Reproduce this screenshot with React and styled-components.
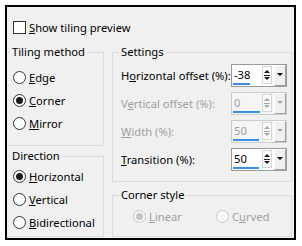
import React from "react";
import styled, { createGlobalStyle } from "styled-components";

const GlobalStyle = createGlobalStyle`
  body {
    margin: 0;
    background: #fff;
    font-family: "Noto Sans", "Liberation Sans", sans-serif;
    font-size: 11.2px;
    color: #000;
  }
`;

const Dialog = styled.div`
  margin: 5px 0 0 5px;
  width: 287px;
  height: 231px;
  border: 2px solid #000;
  background: #f0f0f0;
  display: flex;
  flex-direction: column;
`;

const CheckRow = styled.label`
  display: flex;
  align-items: center;
  gap: 3px;
  height: 13px;
  margin: 14px 0 0 6px;
  line-height: 13px;
`;

const CheckBox = styled.span`
  width: 13px;
  height: 13px;
  box-sizing: border-box;
  border: 1px solid #333;
  background: #fff;
`;

const Columns = styled.div`
  display: flex;
  gap: 8px;
  margin-top: 10px;
`;

const Column = styled.div`
  display: flex;
  flex-direction: column;
  width: ${(p) => p.$width}px;
`;

const Group = styled.fieldset`
  margin: ${(p) => p.$top || 0}px 0 0 0;
  padding: 0;
  min-width: 0;
  border: 1px solid #dcdcdc;
  border-left: ${(p) => (p.$noLeft ? "none" : "1px solid #dcdcdc")};
`;

const Title = styled.legend`
  margin-left: ${(p) => p.$indent}px;
  padding: 0 2px;
  line-height: 16px;
`;

const GroupBody = styled.div`
  padding: ${(p) => p.$pad};
`;

const RadioRow = styled.label`
  display: flex;
  align-items: center;
  gap: 3px;
  height: 23px;
  color: ${(p) => (p.$disabled ? "#a0a0a0" : "#000")};
`;

const RadioCircle = styled.span`
  width: 13px;
  height: 13px;
  box-sizing: border-box;
  border-radius: 50%;
  border: 1px solid ${(p) => (p.$disabled ? "#c8c8c8" : "#333")};
  background: ${(p) => (p.$disabled ? "#f7f7f7" : "#fff")};
  display: flex;
  align-items: center;
  justify-content: center;

  &::after {
    content: "";
    display: ${(p) => (p.$checked ? "block" : "none")};
    width: 7px;
    height: 7px;
    border-radius: 50%;
    background: ${(p) => (p.$disabled ? "#c4c4c4" : "#1a1a1a")};
  }
`;

const RadioPair = styled.div`
  display: grid;
  grid-template-columns: 83px auto;
`;

const SettingRow = styled.div`
  display: flex;
  align-items: center;
  height: 23px;
`;

const RowList = styled.div`
  display: flex;
  flex-direction: column;
  gap: 5px;
`;

const SettingLabel = styled.span`
  width: 110px;
  white-space: nowrap;
  color: ${(p) => (p.$disabled ? "#a0a0a0" : "#000")};
`;

const Field = styled.div`
  width: 56px;
  height: 23px;
  box-sizing: border-box;
  display: flex;
  border: 1px solid ${(p) => (p.$disabled ? "#cccccc" : "#9a9a9a")};
  background: ${(p) => (p.$disabled ? "#f5f5f5" : "#fff")};
`;

const ValueBox = styled.div`
  width: 30px;
  display: flex;
  flex-direction: column;
  padding: 0 0 1px 1px;
  box-sizing: border-box;
`;

const Value = styled.span`
  flex: 1;
  display: flex;
  align-items: center;
  padding-left: 1px;
  color: ${(p) => (p.$disabled ? "#9aa3ad" : "#000")};
`;

const Bar = styled.span`
  height: 2px;
  background: #3a8ee6;
`;

const DropButton = styled.span`
  width: 12px;
  margin-left: 2px;
  box-sizing: border-box;
  border-top: 1px solid #fff;
  border-left: 1px solid #fff;
  border-right: 1px solid #a0a0a0;
  border-bottom: 1px solid #a0a0a0;
  background: #f0f0f0;
  display: flex;
  justify-content: center;
  padding-top: 7px;

  &::after {
    content: "";
    width: 0;
    height: 0;
    border-left: 3px solid transparent;
    border-right: 3px solid transparent;
    border-top: 3px solid ${(p) => (p.$disabled ? "#a8a8a8" : "#000")};
  }
`;

const SpinPair = ({ disabled }) => {
  const ink = disabled ? "#a8a8a8" : "#1a1a1a";
  return (
    <svg width="10" height="19" viewBox="0 0 10 19" style={{ marginTop: 1 }}>
      <rect x="0.5" y="0.5" width="9" height="17" fill="#fbfbfb" stroke="#d6d6d6" />
      <polygon points="2,7 8,7 5,4" fill={ink} />
      <line x1="2" y1="9.5" x2="8" y2="9.5" stroke={ink} />
      <polygon points="2,11 8,11 5,14" fill={ink} />
    </svg>
  );
};

const Radio = ({ checked, disabled, children }) => (
  <RadioRow $disabled={disabled}>
    <RadioCircle $checked={checked} $disabled={disabled} />
    <span>{children}</span>
  </RadioRow>
);

const settings = [
  { label: <>H<u>o</u>rizontal offset (%):</>, value: "-38", fill: 17 },
  { label: <>V<u>e</u>rtical offset (%):</>, value: "0", fill: 27, disabled: true },
  { label: <><u>W</u>idth (%):</>, value: "50", fill: 26, disabled: true },
  { label: <><u>T</u>ransition (%):</>, value: "50", fill: 26 },
];

export default function App() {
  return (
    <>
      <GlobalStyle />
      <Dialog>
        <CheckRow>
          <CheckBox />
          <span>
            <u>S</u>how tiling preview
          </span>
        </CheckRow>
        <Columns>
          <Column $width={97}>
            <Group $noLeft>
              <Title $indent={3}>Tiling method</Title>
              <GroupBody $pad="6px 0 10px 6px">
                <Radio><u>E</u>dge</Radio>
                <Radio checked><u>C</u>orner</Radio>
                <Radio><u>M</u>irror</Radio>
              </GroupBody>
            </Group>
            <Group $noLeft $top={2}>
              <Title $indent={3}>Direction</Title>
              <GroupBody $pad="1px 0 2px 6px">
                <Radio checked><u>H</u>orizontal</Radio>
                <Radio><u>V</u>ertical</Radio>
                <Radio><u>B</u>idirectional</Radio>
              </GroupBody>
            </Group>
          </Column>
          <Column $width={180}>
            <Group>
              <Title $indent={6}>Settings</Title>
              <GroupBody $pad="4px 0 10px 8px">
                <RowList>
                  {settings.map((s, i) => (
                    <SettingRow key={i}>
                      <SettingLabel $disabled={s.disabled}>{s.label}</SettingLabel>
                      <Field $disabled={s.disabled}>
                        <ValueBox>
                          <Value $disabled={s.disabled}>{s.value}</Value>
                          <Bar style={{ width: s.fill }} />
                        </ValueBox>
                        <SpinPair disabled={s.disabled} />
                        <DropButton $disabled={s.disabled} />
                      </Field>
                    </SettingRow>
                  ))}
                </RowList>
              </GroupBody>
            </Group>
            <Group $top={5}>
              <Title $indent={6}>Corner style</Title>
              <GroupBody $pad="2px 0 8px 20px">
                <RadioPair>
                  <Radio checked disabled><u>L</u>inear</Radio>
                  <Radio disabled>C<u>u</u>rved</Radio>
                </RadioPair>
              </GroupBody>
            </Group>
          </Column>
        </Columns>
      </Dialog>
    </>
  );
}
